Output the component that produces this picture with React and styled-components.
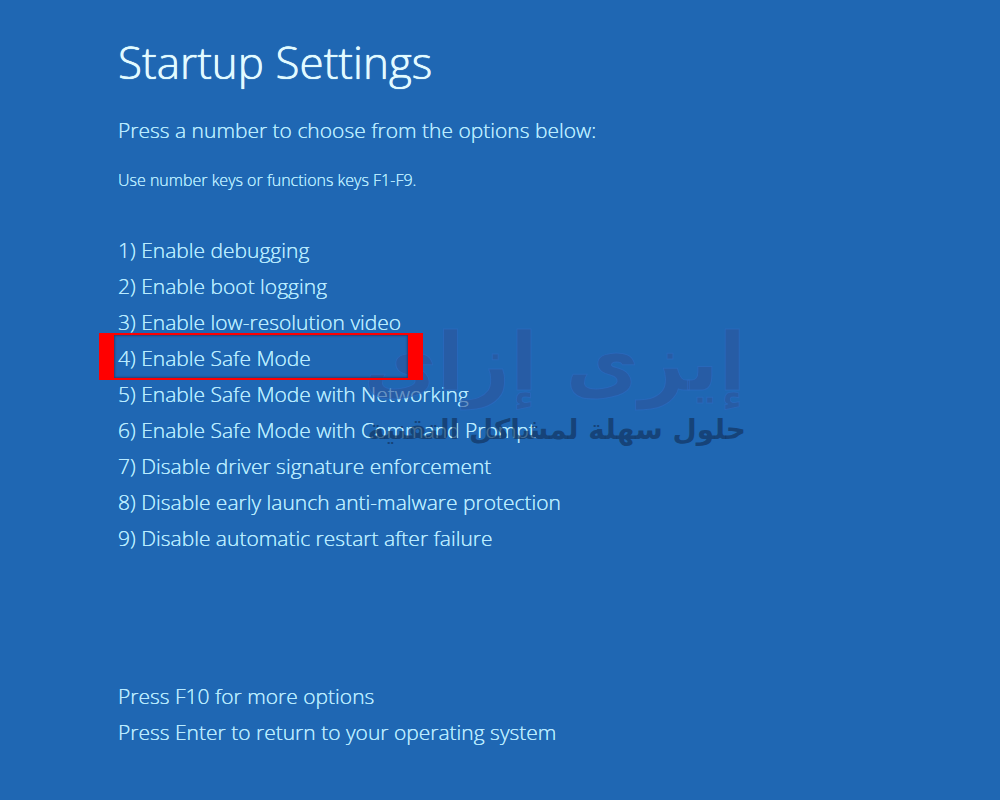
import React from "react";
import styled, { createGlobalStyle, css } from "styled-components";

const GlobalStyle = createGlobalStyle`
  *, *::before, *::after { box-sizing: border-box; }
  body {
    margin: 0;
    background: #1f67b3;
    color: #b9ebff;
    font-family: "Open Sans", "Noto Sans", sans-serif;
    font-weight: 300;
    text-shadow: 0 0 0 currentColor;
  }
`;

const Screen = styled.main`
  position: relative;
  min-height: 100vh;
  padding: 32px 24px 48px 118px;
  overflow: hidden;
`;

const Title = styled.h1`
  margin: 0;
  font-size: 44px;
  line-height: 60px;
  font-weight: 300;
  color: #e2fbff;
  text-shadow: 0 0 0 #e2fbff, 0 0 1px #e2fbff;
`;

const Line = styled.p`
  margin: 0;
  font-size: 21px;
  line-height: 36px;
`;

const Intro = styled(Line)`
  margin-top: 20px;
`;

const Hint = styled.p`
  margin: 20px 0 0;
  font-size: 16px;
  line-height: 24px;
`;

const Options = styled.ol`
  list-style: none;
  margin: 40px 0 0;
  padding: 0;
`;

const Option = styled.li`
  position: relative;
  width: fit-content;
  font-size: 21px;
  line-height: 36px;

  ${({ $marked }) =>
    $marked &&
    css`
      &::after {
        content: "";
        position: absolute;
        z-index: 2;
        top: -7px;
        left: -19px;
        width: 324px;
        height: 47px;
        border: solid #ff0000;
        border-width: 2px 15px;
        box-shadow: inset 0 0 2px 1px #2b3f74;
      }
    `}
`;

const Footer = styled.footer`
  margin-top: 122px;
`;

const Watermark = styled.div`
  position: absolute;
  z-index: 1;
  top: 316px;
  left: 370px;
  width: 376px;
  direction: rtl;
  white-space: nowrap;
  font-family: "DejaVu Sans", sans-serif;
  font-weight: 700;
  text-shadow: none;
  pointer-events: none;
`;

const Brand = styled.div`
  font-size: 80px;
  line-height: 94px;
  color: rgba(45, 85, 155, 0.6);
  -webkit-text-stroke: 1px rgba(45, 108, 196, 0.6);
`;

const Tagline = styled.div`
  font-size: 28px;
  line-height: 40px;
  color: rgba(18, 52, 96, 0.7);
`;

const options = [
  "Enable debugging",
  "Enable boot logging",
  "Enable low-resolution video",
  "Enable Safe Mode",
  "Enable Safe Mode with Networking",
  "Enable Safe Mode with Command Prompt",
  "Disable driver signature enforcement",
  "Disable early launch anti-malware protection",
  "Disable automatic restart after failure",
];

export default function App() {
  return (
    <>
      <GlobalStyle />
      <Screen>
        <Title>Startup Settings</Title>
        <Intro>Press a number to choose from the options below:</Intro>
        <Hint>Use number keys or functions keys F1-F9.</Hint>
        <Options>
          {options.map((label, i) => (
            <Option key={label} $marked={i === 3}>
              {`${i + 1}) ${label}`}
            </Option>
          ))}
        </Options>
        <Footer>
          <Line>Press F10 for more options</Line>
          <Line>Press Enter to return to your operating system</Line>
        </Footer>
        <Watermark lang="ar">
          <Brand>إيزى إزاى</Brand>
          <Tagline>حلول سهلة لمشاكل التقنية</Tagline>
        </Watermark>
      </Screen>
    </>
  );
}
